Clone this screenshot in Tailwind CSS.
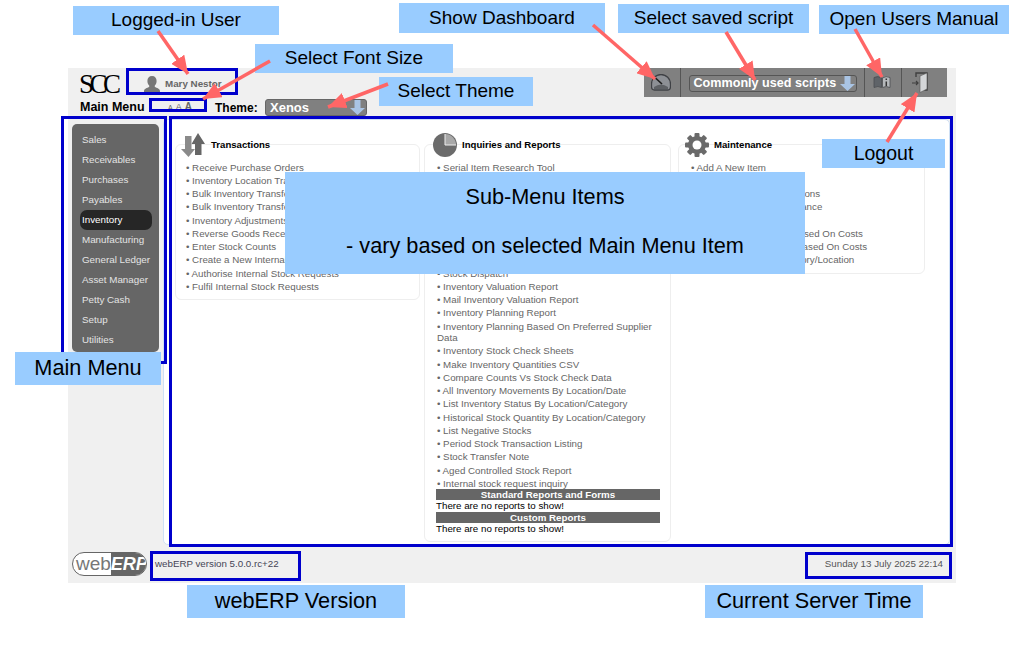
<!DOCTYPE html>
<html lang="en">
<head>
    <meta charset="UTF-8">
    <meta name="viewport" content="width=device-width, initial-scale=1.0">
    <title>webERP Main Menu</title>
    <script src="https://cdn.jsdelivr.net/npm/@tailwindcss/browser@4"></script>
</head>
<body class="bg-white font-['Liberation_Sans',Arial,sans-serif]">
<div class="relative w-[1024px] h-[651px] overflow-hidden pt-[68px] pl-[68px]">

    <!-- application panel -->
    <div class="w-[888px] h-[515px] bg-[#f0f0f0] flex flex-col">

        <!-- header -->
        <div class="h-[51px] flex justify-between items-start">
            <div class="pl-[12px] pt-[4px]">
                <div class="flex items-center h-[24px]">
                    <span class="font-['Liberation_Serif',serif] text-[27px] leading-[24px] tracking-[-4.500px] text-black w-[46px] -ml-[1px] mr-[1px]">SCC</span>
                    <svg class="ml-[17px] w-[18px] h-[17px]" viewBox="0 0 18 17"><path d="M9 0c3 0 4.600 2 4.600 5 0 2-.8 3.600-1.800 4.600v1.400c2 1 5.200 1.500 5.200 4v2H1v-2c0-2.500 3.200-3 5.200-4V9.600C5.200 8.600 4.400 7 4.400 5 4.400 2 6 0 9 0z" fill="#777"/></svg>
                    <span class="ml-[4px] text-[9.800px] font-bold text-[#666]">Mary Nestor</span>
                </div>
                <div class="flex items-center h-[19px] mt-[2px]">
                    <span class="text-[12.500px] font-bold text-black w-[87px]">Main Menu</span>
                    <span class="w-[48px] flex items-baseline gap-[3px] text-[#666] pl-[1px]">
                        <span class="text-[7px] leading-[10px]">A</span><span class="text-[9px] leading-[10px]">A</span><span class="text-[10px] leading-[10px] font-bold">A</span>
                    </span>
                    <span class="text-[12px] font-bold text-black w-[50px]">Theme:</span>
                    <div class="w-[102px] h-[17px] bg-[#808080] border border-[#666] rounded-[3px] flex items-center justify-between pl-[4px] pr-[1px]">
                        <span class="text-[13px] font-bold text-white">Xenos</span>
                        <svg class="w-[15px] h-[15px]" viewBox="0 0 15 15"><path d="M4.500 0h6v8H15l-7.500 7L0 8h4.500z" fill="#a9c4e4"/></svg>
                    </div>
                </div>
            </div>
            <div class="w-[303px] h-[29px] mr-[9px] bg-[#808080] flex items-center">
                <div class="w-[37px] h-full border-r border-[#555] flex items-center pl-[7px]">
                    <svg class="w-[20px] h-[17px]" viewBox="0 0 20 17"><path d="M10 .5a9.500 9.500 0 0 1 9.500 9.500v2.500q0 3.500-3 3.500h-13q-3 0-3-3.500V10A9.500 9.500 0 0 1 10 .5z" fill="#8d9095" stroke="#3f4145" stroke-width="1.300"/><path d="M3 13Q10 8 17 13v2H3z" fill="#5d6064"/><path d="M4.500 4l6.500 6" stroke="#1d1d1d" stroke-width="1.600"/></svg>
                </div>
                <div class="w-[184px] h-full border-r border-[#555] flex items-center justify-center">
                    <div class="w-[168px] h-[17px] mt-[1px] border border-[#555] rounded-[3px] flex items-center justify-between pl-[4px] pr-[1px]">
                        <span class="text-[12.600px] font-bold text-white whitespace-nowrap">Commonly used scripts</span>
                        <svg class="w-[15px] h-[15px]" viewBox="0 0 15 15"><path d="M4.500 0h6v8H15l-7.500 7L0 8h4.500z" fill="#a9c4e4"/></svg>
                    </div>
                </div>
                <div class="w-[37px] h-full border-r border-[#555] flex items-center pl-[8px]">
                    <svg class="w-[18px] h-[13px]" viewBox="0 0 18 13"><path d="M1 1.500Q5-.5 8.500 2v9.500Q5 9.500 1 11.500z" fill="#5f6368" stroke="#4a4d50" stroke-width=".8"/><path d="M9.500 2Q13-.5 17 1.500v10q-4-2-7.500 0z" fill="#b5b8bb" stroke="#4a4d50" stroke-width=".8"/><path d="M13.300 2.500v1.500M13.300 5.500v4.500" stroke="#333" stroke-width="1.500"/></svg>
                </div>
                <div class="flex-1 h-full flex items-center pl-[10px]">
                    <svg class="w-[16px] h-[21px]" viewBox="0 0 16 21"><path d="M4 5V1h11v17h-3" fill="none" stroke="#3f3f3f" stroke-width="1.400"/><path d="M8 4l7-3v16l-7 3.500z" fill="#d4d6d8" stroke="#555" stroke-width=".6"/><path d="M0 11h6M4 9l2 2-2 2" fill="none" stroke="#3f3f3f" stroke-width="1.200"/></svg>
                </div>
            </div>
        </div>

        <!-- body -->
        <div class="h-[426px] flex">
            <div class="w-[95px] pl-[4px] pt-[5px]">
                <ul class="w-[87px] h-[228px] bg-[#666] rounded-[5px] pt-[6px] pl-[3px] text-[9.800px] text-[#e4e4e4]">
                    <li class="h-[20px] leading-[20px] pl-[7px]">Sales</li>
                    <li class="h-[20px] leading-[20px] pl-[7px]">Receivables</li>
                    <li class="h-[20px] leading-[20px] pl-[7px]">Purchases</li>
                    <li class="h-[20px] leading-[20px] pl-[7px]">Payables</li>
                    <li class="h-[20px] leading-[20px] pl-[2px] ml-[5px] w-[72px] rounded-[7px] bg-[#262626] text-white">Inventory</li>
                    <li class="h-[20px] leading-[20px] pl-[7px]">Manufacturing</li>
                    <li class="h-[20px] leading-[20px] pl-[7px]">General Ledger</li>
                    <li class="h-[20px] leading-[20px] pl-[7px]">Asset Manager</li>
                    <li class="h-[20px] leading-[20px] pl-[7px]">Petty Cash</li>
                    <li class="h-[20px] leading-[20px] pl-[7px]">Setup</li>
                    <li class="h-[20px] leading-[20px] pl-[7px]">Utilities</li>
                </ul>
            </div>

            <div class="w-[787px] h-[426px] bg-white border border-[#cfe0f5] rounded-[5px] flex gap-[4px] pl-[11px] pt-[13px] text-[9.750px] text-[#666]">

                <div class="w-[245px]">
                    <div class="relative flex items-center h-[24px] pl-[6px] gap-[6px] text-black font-bold text-[9.600px]">
                        <svg class="w-[24px] h-[24px]" viewBox="0 0 24 24"><path d="M14 11h-3.500L17 0l7 11h-3.500v11H14z" fill="#666"/><path d="M4 3h6.500v13H14l-6.500 8L0 16h4z" fill="#8a8a8a"/></svg>
                        Transactions
                    </div>
                    <div class="-mt-[13px] h-[156px] border border-[#eeeeee] rounded-[6px] pl-[10px] pt-[16.500px] leading-[11.500px] [&>p]:mb-[1.750px]">
                        <p>• Receive Purchase Orders</p>
                        <p>• Inventory Location Transfers</p>
                        <p>• Bulk Inventory Transfer - Dispatch</p>
                        <p>• Bulk Inventory Transfer - Receive</p>
                        <p>• Inventory Adjustments</p>
                        <p>• Reverse Goods Received</p>
                        <p>• Enter Stock Counts</p>
                        <p>• Create a New Internal Stock Request</p>
                        <p>• Authorise Internal Stock Requests</p>
                        <p>• Fulfil Internal Stock Requests</p>
                    </div>
                </div>

                <div class="w-[247px]">
                    <div class="relative flex items-center h-[24px] pl-[9px] gap-[5px] text-black font-bold text-[9.600px]">
                        <svg class="w-[24px] h-[24px]" viewBox="0 0 24 24"><circle cx="12" cy="12" r="12" fill="#6b6b6b"/><path d="M12 12V1a11 11 0 0 1 11 11z" fill="#a8a8a8"/><path d="M12 12V1M12 12h11" stroke="#eee" stroke-width="1"/></svg>
                        Inquiries and Reports
                    </div>
                    <div class="-mt-[13px] h-[398px] border border-[#eeeeee] rounded-[6px] pl-[12px] pr-[10px] pt-[16.500px] leading-[11.500px] [&>p]:mb-[1.750px]">
                        <p>• Serial Item Research Tool</p>
                        <p>• Print Price Labels</p>
                        <p>• Reprint GRN</p>
                        <p>• Inventory Item Movements</p>
                        <p>• Inventory Item Status</p>
                        <p>• Inventory Item Usage</p>
                        <p>• Inventory Quantities</p>
                        <p>• Reorder Level</p>
                        <p>• Stock Dispatch</p>
                        <p>• Inventory Valuation Report</p>
                        <p>• Mail Inventory Valuation Report</p>
                        <p>• Inventory Planning Report</p>
                        <p>• Inventory Planning Based On Preferred Supplier Data</p>
                        <p>• Inventory Stock Check Sheets</p>
                        <p>• Make Inventory Quantities CSV</p>
                        <p>• Compare Counts Vs Stock Check Data</p>
                        <p>• All Inventory Movements By Location/Date</p>
                        <p>• List Inventory Status By Location/Category</p>
                        <p>• Historical Stock Quantity By Location/Category</p>
                        <p>• List Negative Stocks</p>
                        <p>• Period Stock Transaction Listing</p>
                        <p>• Stock Transfer Note</p>
                        <p>• Aged Controlled Stock Report</p>
                        <p>• Internal stock request inquiry</p>
                        <div class="-ml-[1px] -mt-[2px] bg-[#666] h-[11px] leading-[11px] text-white font-bold text-center">Standard Reports and Forms</div>
                        <div class="-ml-[1px] text-black h-[12px] leading-[12px]">There are no reports to show!</div>
                        <div class="-ml-[1px] bg-[#666] h-[11px] leading-[11px] text-white font-bold text-center">Custom Reports</div>
                        <div class="-ml-[1px] text-black h-[12px] leading-[12px]">There are no reports to show!</div>
                    </div>
                </div>

                <div class="w-[247px] ml-[3px]">
                    <div class="relative flex items-center h-[24px] pl-[7px] gap-[5px] text-black font-bold text-[9.600px]">
                        <svg class="w-[24px] h-[24px]" viewBox="0 0 24 24">
                            <g fill="#6a6a6a">
                                <rect x="9.500" y="0" width="5" height="24" rx="1"/>
                                <rect x="9.500" y="0" width="5" height="24" rx="1" transform="rotate(45 12 12)"/>
                                <rect x="9.500" y="0" width="5" height="24" rx="1" transform="rotate(90 12 12)"/>
                                <rect x="9.500" y="0" width="5" height="24" rx="1" transform="rotate(135 12 12)"/>
                                <circle cx="12" cy="12" r="9"/>
                            </g>
                            <circle cx="12" cy="12" r="4.500" fill="#fff"/>
                        </svg>
                        Maintenance
                    </div>
                    <div class="-mt-[13px] h-[130px] border border-[#eeeeee] rounded-[6px] pl-[12px] pt-[16.500px] leading-[11.500px] [&>p]:mb-[1.750px]">
                        <p>• Add A New Item</p>
                        <p>• Select An Item</p>
                        <p>• Sales Category Descriptions</p>
                        <p>• Sales Category Maintenance</p>
                        <p>• Brands Maintenance</p>
                        <p>• Add or Update Prices Based On Costs</p>
                        <p>• View or Update Prices Based On Costs</p>
                        <p>• Reorder Level By Category/Location</p>
                    </div>
                </div>
            </div>
        </div>

        <!-- footer -->
        <div class="flex-1 flex items-center justify-between pl-[4px] pr-[13px] text-[9.750px] text-[#555]">
            <div class="flex items-center">
                <div class="relative w-[75px] h-[24px] rounded-[12px] border border-[#666] bg-white overflow-hidden flex items-center">
                    <div class="absolute right-0 top-0 w-[35px] h-full bg-[#666]"></div>
                    <span class="relative pl-[3px] text-[19px] leading-[22px] text-[#777] w-[39px]">web</span>
                    <span class="relative text-[18px] leading-[22px] font-bold italic text-white">ERP</span>
                </div>
                <span class="ml-[8px] text-[#445]">webERP version 5.0.0.rc+22</span>
            </div>
            <span>Sunday 13 July 2025 22:14</span>
        </div>
    </div>

    <!-- annotation outlines -->
    <div class="absolute left-[126px] top-[68px] w-[112px] h-[27px] border-[3px] border-[#0000cc]"></div>
    <div class="absolute left-[149px] top-[98px] w-[58px] h-[14px] border-[3px] border-[#0000cc]"></div>
    <div class="absolute left-[61px] top-[116px] w-[106px] h-[248px] border-[3px] border-[#0000cc]"></div>
    <div class="absolute left-[169px] top-[116px] w-[784px] h-[431px] border-[3px] border-[#0000cc]"></div>
    <div class="absolute left-[150px] top-[551px] w-[151px] h-[30px] border-[3px] border-[#0000cc]"></div>
    <div class="absolute left-[805px] top-[552px] w-[147px] h-[27px] border-[3px] border-[#0000cc]"></div>

    <!-- annotation labels -->
    <div class="absolute left-[73px] top-[6px] w-[206px] h-[29px] bg-[#99ccff] flex items-center justify-center text-[19px] text-black">Logged-in User</div>
    <div class="absolute left-[255px] top-[44px] w-[198px] h-[29px] bg-[#99ccff] flex items-center justify-center text-[19px] text-black">Select Font Size</div>
    <div class="absolute left-[379px] top-[77px] w-[154px] h-[29px] bg-[#99ccff] flex items-center justify-center text-[19px] text-black">Select Theme</div>
    <div class="absolute left-[399px] top-[3px] w-[206px] h-[30px] bg-[#99ccff] flex items-center justify-center text-[19px] text-black">Show Dashboard</div>
    <div class="absolute left-[618px] top-[4px] w-[191px] h-[29px] bg-[#99ccff] flex items-center justify-center text-[19px] text-black">Select saved script</div>
    <div class="absolute left-[819px] top-[5px] w-[190px] h-[29px] bg-[#99ccff] flex items-center justify-center text-[19px] text-black">Open Users Manual</div>
    <div class="absolute left-[822px] top-[139px] w-[123px] h-[29px] bg-[#99ccff] flex items-center justify-center text-[19.500px] text-black">Logout</div>
    <div class="absolute left-[285px] top-[172px] w-[520px] h-[102px] bg-[#99ccff] text-center text-[21.700px] leading-[24px] text-black pt-[13px]">
        <p>Sub-Menu Items</p>
        <p class="mt-[25px]">- vary based on selected Main Menu Item</p>
    </div>
    <div class="absolute left-[15px] top-[352px] w-[146px] h-[33px] bg-[#99ccff] flex items-center justify-center text-[21.700px] text-black">Main Menu</div>
    <div class="absolute left-[187px] top-[585px] w-[218px] h-[33px] bg-[#99ccff] flex items-center justify-center text-[21.700px] text-black">webERP Version</div>
    <div class="absolute left-[705px] top-[585px] w-[218px] h-[33px] bg-[#99ccff] flex items-center justify-center text-[21.700px] text-black">Current Server Time</div>

    <!-- annotation arrows -->
    <svg class="absolute left-0 top-0 pointer-events-none" width="1024" height="651" viewBox="0 0 1024 651">
        <defs>
            <marker id="head" markerUnits="userSpaceOnUse" markerWidth="20" markerHeight="16" refX="18" refY="8" orient="auto">
                <path d="M0 0L18 8L0 16z" fill="#ff6666"/>
            </marker>
        </defs>
        <g stroke="#ff6666" stroke-width="3.500" fill="none">
            <path d="M158 31L188 74" marker-end="url(#head)"/>
            <path d="M270 61L203 99" marker-end="url(#head)"/>
            <path d="M388 84L328 107" marker-end="url(#head)"/>
            <path d="M593 25L655 79" marker-end="url(#head)"/>
            <path d="M726 32L755 80" marker-end="url(#head)"/>
            <path d="M855 29L882 77" marker-end="url(#head)"/>
            <path d="M887 142L917 93" marker-end="url(#head)"/>
        </g>
    </svg>
</div>
</body>
</html>
